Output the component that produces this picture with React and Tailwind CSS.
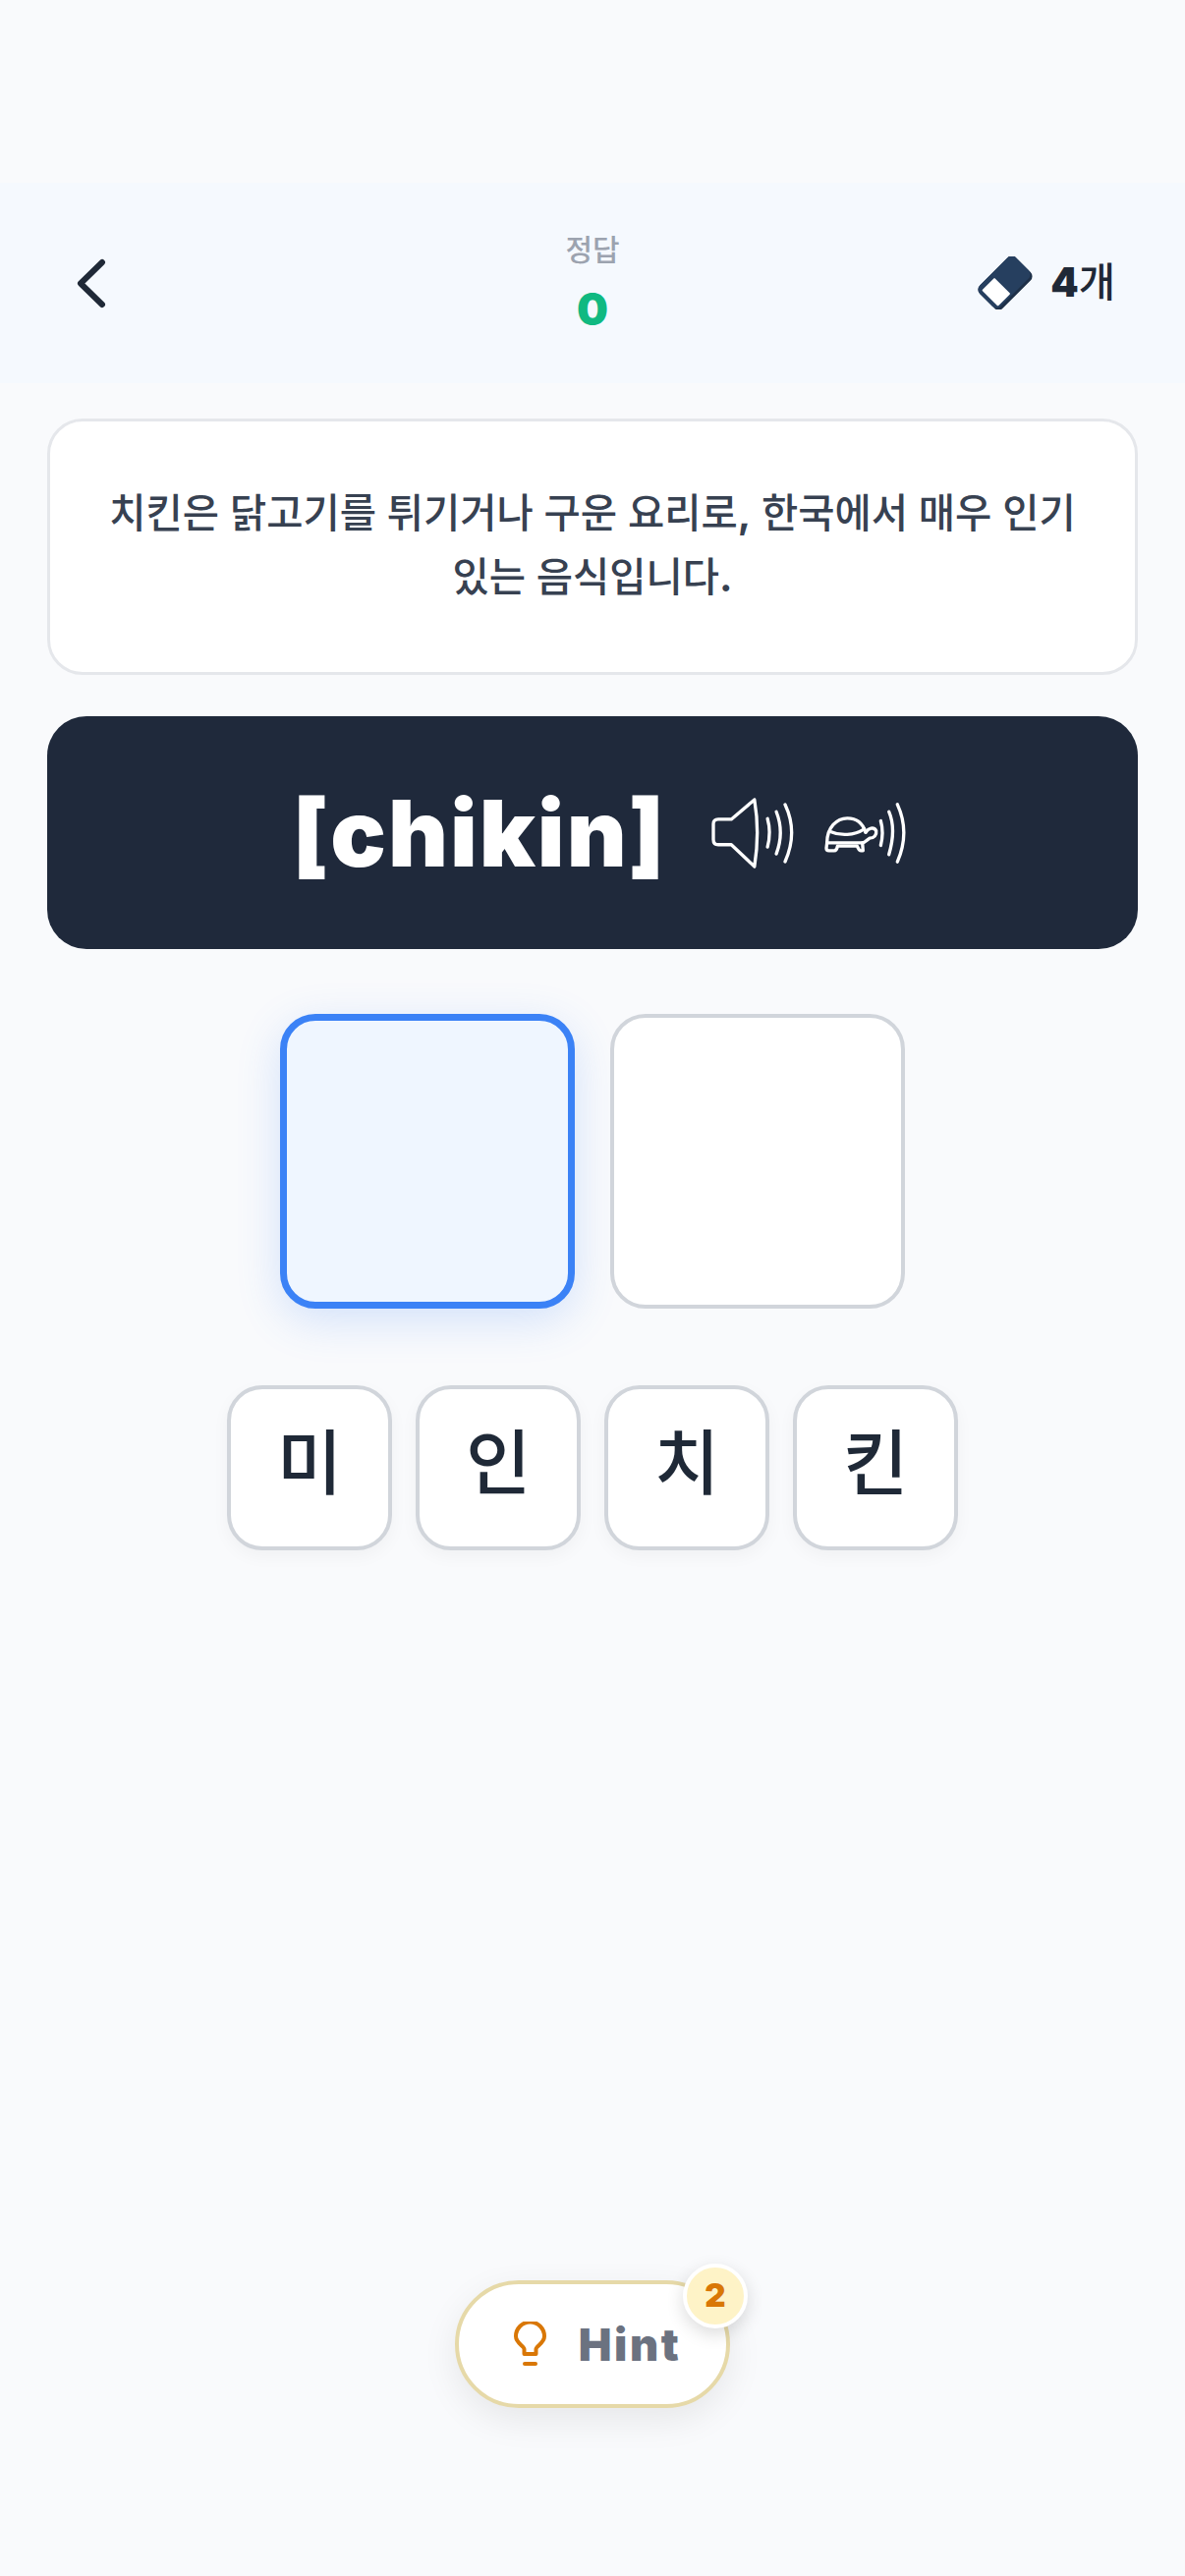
const KO = 'font-["Inter","Noto_Sans_CJK_KR",sans-serif]'

function BackIcon() {
  return (
    <svg width="30" height="51" viewBox="0 0 30 51" fill="none" stroke="#1f2937" strokeWidth="6" strokeLinecap="round" strokeLinejoin="round">
      <path d="M26 4 L4 25.500 L26 47" />
    </svg>
  )
}

function EraserIcon() {
  return (
    <svg width="56" height="54" viewBox="0 0 56 54">
      <g transform="rotate(-45 28 27)">
        <rect x="2" y="10.500" width="52" height="33" rx="6" fill="#1e3048" />
        <rect x="2" y="10.500" width="52" height="30" rx="6" fill="#263f5f" />
        <rect x="6" y="15.500" width="18" height="23" rx="1" fill="#ffffff" />
      </g>
    </svg>
  )
}

function SpeakerIcon() {
  return (
    <svg width="87" height="78" viewBox="95 85 260 235" fill="none" stroke="#ffffff" strokeWidth="10" strokeLinecap="round" strokeLinejoin="round">
      <path d="M226 100 L155 160 H115 Q100 160 100 175 V222 Q100 238 115 238 H155 L226 305 Q243 200 226 100 Z" />
      <path d="M266 158 Q278 200 266 245" />
      <path d="M293 137 Q318 200 293 266" />
      <path d="M320 115 Q360 200 320 290" />
    </svg>
  )
}

function TurtleIcon() {
  return (
    <svg width="85" height="62" viewBox="440 110 255 185" fill="none" stroke="#ffffff" strokeWidth="10" strokeLinecap="round" strokeLinejoin="round">
      <path d="M448 232 C448 185 478 157 510 157 C540 157 558 175 566 200" />
      <path d="M456 197 C490 212 530 210 562 190" />
      <path d="M448 232 H555 C565 232 570 222 578 218 C592 218 600 208 598 195 C590 182 575 188 566 200" />
      <path d="M448 232 L446 248 Q446 256 454 256 H470 Q478 256 480 242 H540 L544 250 Q546 256 552 256 H558 L556 232" />
      <path d="M612 165 Q622 200 612 240" />
      <path d="M637 137 Q660 190 637 268" />
      <path d="M663 115 Q702 200 663 290" />
    </svg>
  )
}

function BulbIcon() {
  return (
    <svg width="33" height="46" viewBox="0 0 33 46" fill="none" stroke="#d97706" strokeWidth="4" strokeLinecap="round" strokeLinejoin="round">
      <path d="M10.500 33v-5c0-3-8.500-6-8.500-13a14.500 14.500 0 0 1 29 0c0 7-8.500 10-8.500 13v5Z" />
      <path d="M11 43h11" />
    </svg>
  )
}

export default function App() {
  const tiles = ['미', '인', '치', '킨']

  return (
    <div className={`flex h-[2622px] w-[1206px] flex-col items-center bg-[#f9fafc] pt-[186px] ${KO}`}>
      <div className="grid h-[204px] w-full grid-cols-3 items-center bg-[#f5f9fe] px-[75px]">
        <div className="pl-[3px]">
          <BackIcon />
        </div>
        <div className="flex flex-col items-center">
          <span className="text-[30px] leading-[45px] font-medium text-[#9ca3af]">정답</span>
          <span className="mt-[8px] text-[45px] leading-[60px] font-black text-[#10b981]">0</span>
        </div>
        <div className="-mr-[4px] flex items-center justify-end gap-[18px]">
          <EraserIcon />
          <span className="text-[40.500px] leading-[60px] font-black text-[#1f2937]">4<span className="font-medium">개</span></span>
        </div>
      </div>

      <div className="mt-[36px] flex h-[261px] w-[1110px] items-center justify-center rounded-[36px] border-[3px] border-[#e5e7eb] bg-white px-[48px] pb-[4px]">
        <p className="text-center text-[40.500px] leading-[65px] font-medium text-[#374151]">치킨은 닭고기를 튀기거나 구운 요리로<span className="font-bold">,</span> 한국에서 매우 인기 있는 음식입니다<span className="font-bold">.</span></p>
      </div>

      <div className="mt-[42px] flex h-[237px] w-[1110px] items-center justify-center gap-[46px] rounded-[40px] bg-[#1f293b] pl-[16px]">
        <span className="text-[94px] leading-none font-black tracking-[2px] text-white">[chikin]</span>
        <div className="flex items-center gap-[28px]">
          <SpeakerIcon />
          <TurtleIcon />
        </div>
      </div>

      <div className="mt-[66px] flex gap-[36px]">
        <div className="h-[300px] w-[300px] rounded-[36px] border-[7px] border-[#3b82f6] bg-[#eff6ff] shadow-[0_12px_45px_rgba(59,130,246,0.2)]" />
        <div className="h-[300px] w-[300px] rounded-[36px] border-[4.500px] border-[#d1d5db] bg-white" />
      </div>

      <div className="mt-[78px] flex gap-[24px]">
        {tiles.map((tile) => (
          <div key={tile} className="flex h-[168px] w-[168px] items-center justify-center rounded-[36px] border-[4.500px] border-[#d1d5db] bg-white pb-[10px] text-[72px] leading-none font-medium text-[#1f2937] shadow-[0_6px_18px_rgba(0,0,0,0.04)]">
            {tile}
          </div>
        ))}
      </div>

      <div className="relative mt-auto mb-[171px] flex h-[130px] w-[280px] items-center justify-center gap-[33px] rounded-full border-[4px] border-[#e6d9a8] bg-white pl-[10px] shadow-[0_12px_36px_rgba(0,0,0,0.08)]">
        <BulbIcon />
        <span className="text-[45px] leading-none font-black tracking-[2.500px] text-[#6b7280]">Hint</span>
        <span className="absolute top-[-21px] right-[-22px] flex h-[66px] w-[66px] items-center justify-center rounded-full border-[4px] border-white bg-[#fef3c7] text-[33px] font-black text-[#d97706] shadow-[0_6px_18px_rgba(0,0,0,0.14)]">2</span>
      </div>
    </div>
  )
}
